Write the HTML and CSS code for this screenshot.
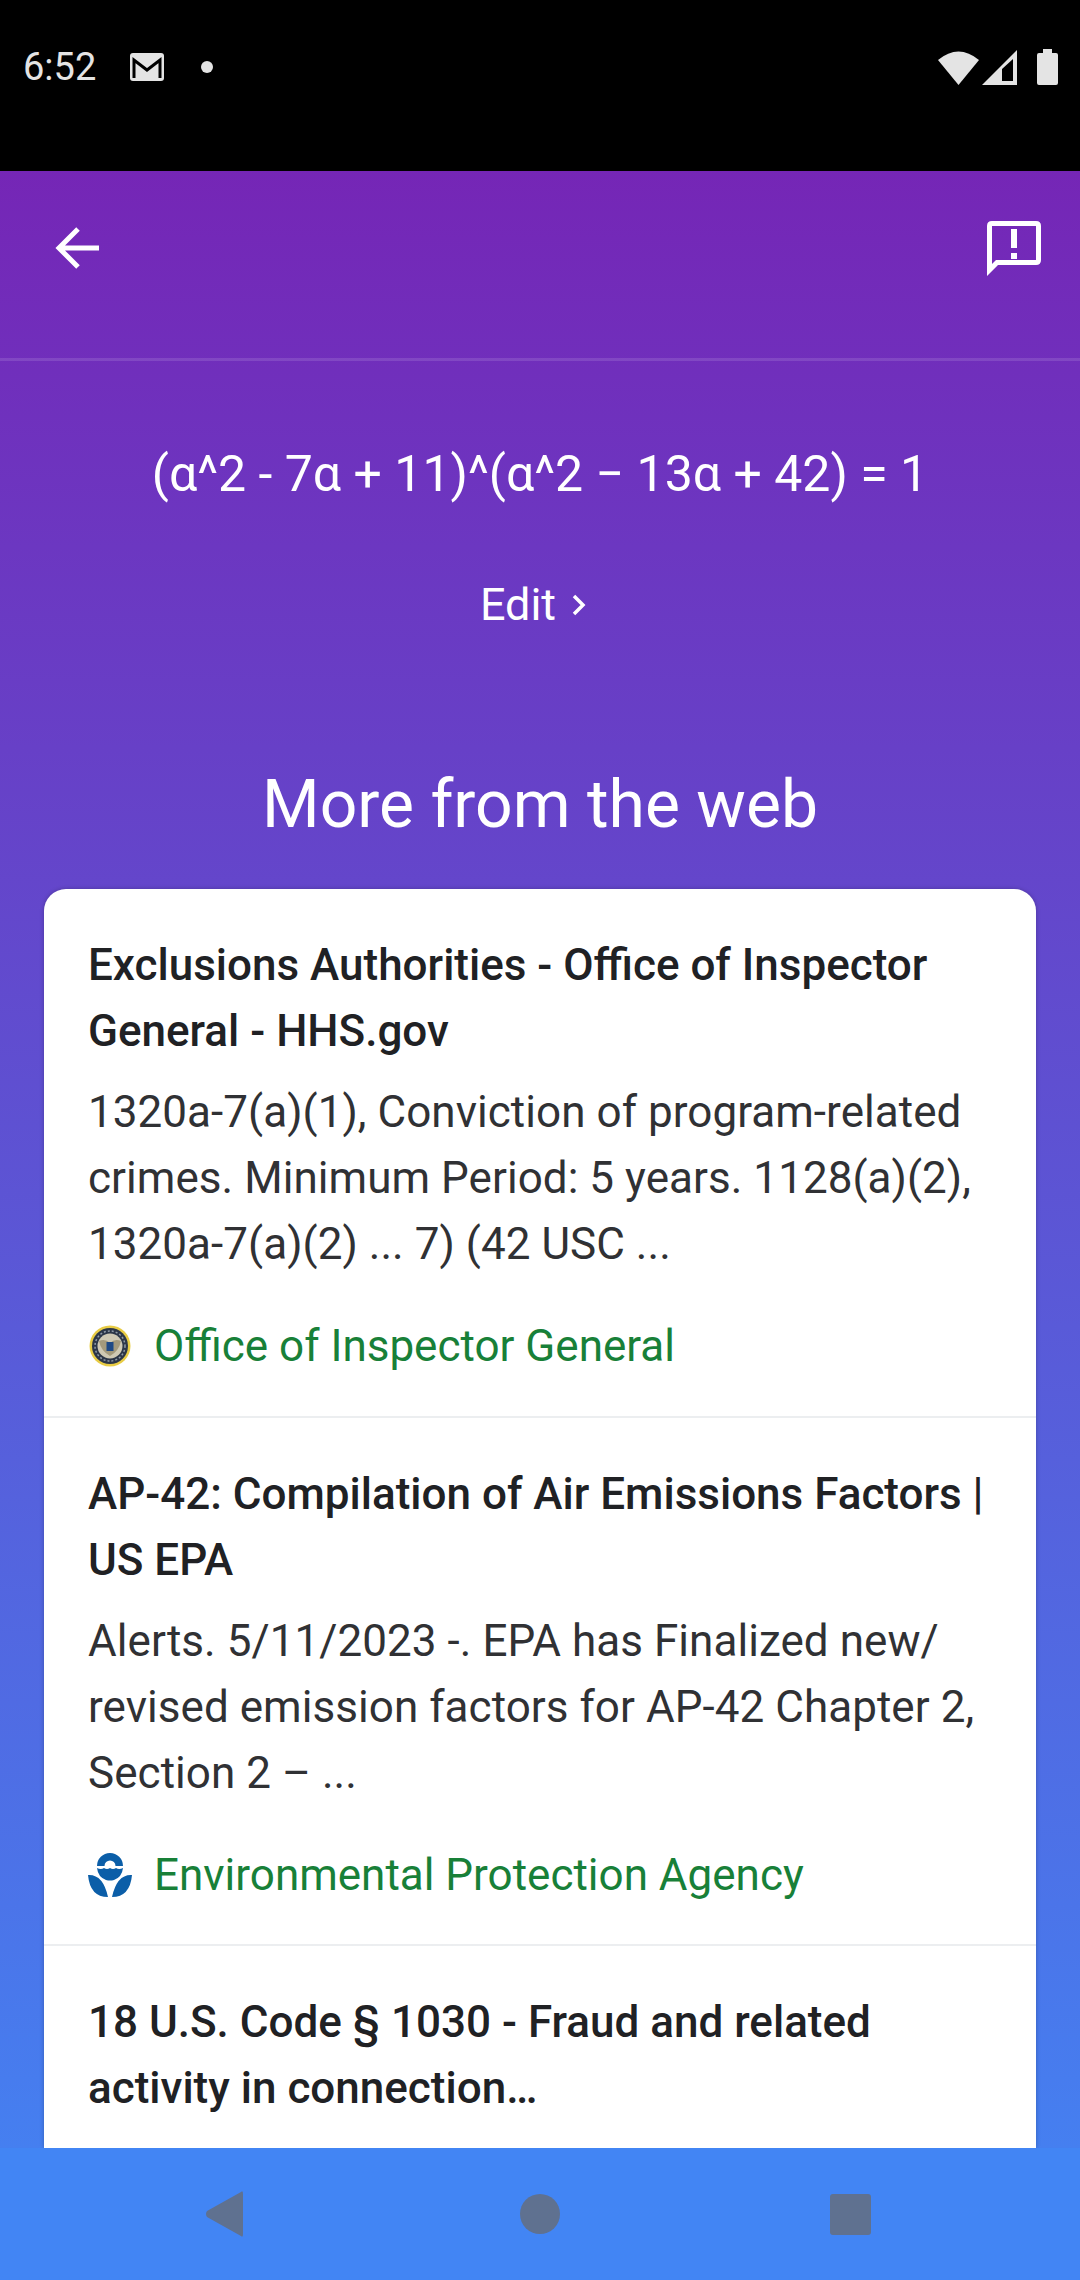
FILE: index.html
```html
<!DOCTYPE html>
<html lang="en">
<head>
<meta charset="utf-8">
<title>More from the web</title>
<link rel="stylesheet" href="styles.css">
</head>
<body>
<div class="phone">
  <header class="status">
    <div class="status-left">
      <span class="time">6:52</span>
      <svg class="gmail" width="36" height="28" viewBox="0 0 36 28"><rect width="34" height="28" x="1" rx="3" fill="#e4e4e4"/><path d="M5 25V7l13 10L31 7v18" fill="none" stroke="#000" stroke-width="3"/></svg>
      <span class="dot"></span>
    </div>
    <div class="status-right">
      <svg width="41" height="34" viewBox="0 0 41 34"><path d="M0 9Q20.500-8 41 9L20.500 34Z" fill="#e4e4e4"/></svg>
      <svg width="35" height="35" viewBox="0 0 35 35"><path d="M35 0V35H0ZM20 19V31H31V9Z" fill="#e4e4e4" fill-rule="evenodd"/></svg>
      <svg class="batt" width="21" height="36" viewBox="0 0 21 36"><path d="M6 0H15V4H19Q21 4 21 6V34Q21 36 19 36H2Q0 36 0 34V6Q0 4 2 4H6Z" fill="#e4e4e4"/></svg>
    </div>
  </header>
  <main class="screen">
    <nav class="toolbar">
      <svg class="back" width="48" height="48" viewBox="0 0 48 48"><path d="M46 24H6M25 5L6 24l19 19" fill="none" stroke="#fff" stroke-width="5"/></svg>
      <svg class="report" width="56" height="56" viewBox="0 0 56 56"><path d="M1 56V6Q1 1 6 1H50Q55 1 55 6V40Q55 45 50 45H12ZM6 44L10 40H50V6H6Z" fill="#fff" fill-rule="evenodd"/><path d="M25 9H31V28H25ZM25 33H31V39H25Z" fill="#fff"/></svg>
    </nav>
    <section class="query">
      <p class="equation">(α^2 - 7α + 11)^(α^2 − 13α + 42) = 1</p>
      <p class="edit">Edit <svg width="14" height="24" viewBox="0 0 14 24"><path d="M2 3l9 9-9 9" fill="none" stroke="#fff" stroke-width="3.500"/></svg></p>
    </section>
    <h1 class="heading">More from the web</h1>
    <section class="card">
      <article class="result">
        <h2>Exclusions Authorities - Office of Inspector General - HHS.gov</h2>
        <p class="snippet">1320a-7(a)(1), Conviction of program-related crimes. Minimum Period: 5 years. 1128(a)(2), 1320a-7(a)(2) ... 7) (42 USC ...</p>
        <div class="source">
          <svg class="favicon" width="44" height="44" viewBox="0 0 44 44"><circle cx="22" cy="22" r="20.500" fill="#e8cc45"/><circle cx="22" cy="22" r="18" fill="#2c3648"/><circle cx="22" cy="22" r="15" fill="none" stroke="#8f9aa6" stroke-width="1.500" stroke-dasharray="2 2"/><circle cx="22" cy="22" r="12.500" fill="#cfc9b4"/><path d="M11 17q6-3 11 2q5-5 11-2q-2 10-11 15q-9-5-11-15Z" fill="#a49a7c"/><rect x="18.500" y="18" width="7" height="9" fill="#1f4a86"/></svg>
          <span>Office of Inspector General</span>
        </div>
      </article>
      <article class="result">
        <h2>AP-42: Compilation of Air Emissions Factors | US EPA</h2>
        <p class="snippet">Alerts. 5/11/2023 -. EPA has Finalized new/ revised emission factors for AP-42 Chapter 2, Section 2 – ...</p>
        <div class="source">
          <svg class="favicon" width="44" height="44" viewBox="0 0 44 44"><path d="M9 13A13 13 0 0 1 35 13H27.500A5.500 5.500 0 0 0 16.500 13Z" fill="#0b5ea8"/><path d="M9 15Q13 17 16 15Q19 17 22 15Q25 17 28 15Q31 17 35 15Q34 24 26 27Q22 28 18 27Q10 24 9 15Z" fill="#0b5ea8"/><path d="M0 22Q15 21 20 44Q2 44 0 22ZM44 22Q29 21 24 44Q42 44 44 22Z" fill="#0b5ea8"/></svg>
          <span>Environmental Protection Agency</span>
        </div>
      </article>
      <article class="result">
        <h2>18 U.S. Code § 1030 - Fraud and related activity in connection…</h2>
      </article>
    </section>
  </main>
  <footer class="navbar">
    <svg width="40" height="46" viewBox="0 0 40 46"><path d="M36 1Q38-1 38 3V43Q38 47 36 45L2 26Q0 23 2 20Z" fill="#5f7190"/></svg>
    <svg width="40" height="40" viewBox="0 0 40 40"><circle cx="20" cy="20" r="20" fill="#5f7190"/></svg>
    <svg width="41" height="41" viewBox="0 0 41 41"><rect width="41" height="41" rx="3" fill="#5f7190"/></svg>
  </footer>
</div>
</body>
</html>
```
FILE: styles.css
```css
* { box-sizing: border-box; }
html, body { margin: 0; padding: 0; }
body { font-family: Roboto, "Liberation Sans", sans-serif; background: #000; }
.phone { width: 1080px; height: 2280px; display: flex; flex-direction: column; overflow: hidden; }
.status { height: 171px; flex: none; background: #000; display: flex; justify-content: space-between; align-items: flex-start; padding: 48px 22px 0 23px; }
.status-left { display: flex; align-items: center; height: 38px; }
.time { color: #e4e4e4; font-size: 38px; line-height: 38px; }
.gmail { margin-left: 33px; }
.dot { width: 12px; height: 12px; border-radius: 50%; background: #e4e4e4; margin-left: 36px; }
.status-right { display: flex; align-items: flex-end; gap: 3px; margin-top: 1px; }
.batt { margin-left: 17px; }
.screen { flex: 1; min-height: 0; overflow: hidden; background: linear-gradient(180deg, #7526b6 0%, #4285f4 100%) top / 100% 2109px no-repeat; display: flex; flex-direction: column; }
.toolbar { height: 190px; flex: none; border-bottom: 3px solid rgba(255,255,255,.12); display: flex; justify-content: space-between; align-items: flex-start; padding: 49px 38px 0 53px; }
.back { margin-top: 4px; }
.query { display: flex; flex-direction: column; align-items: center; color: #fff; }
.equation { margin: 85px 0 0; font-size: 50px; line-height: 56px; font-weight: 400; white-space: nowrap; }
.edit { margin: 78px 14px 0 0; font-size: 45px; line-height: 50px; display: flex; align-items: center; gap: 16px; font-weight: 400; }
.heading { margin: 137px 0 0; text-align: center; color: #fff; font-size: 66px; line-height: 76px; font-weight: 400; }
.card { margin: 46px 44px 0; background: #fff; border-radius: 22px 22px 0 0; flex: 1; min-height: 0; overflow: hidden; box-shadow: 0 0 4px rgba(0,0,0,.25); }
.result { padding: 43px 44px 0; border-bottom: 2px solid #eceef0; height: 528px; }
.result:first-child { height: 529px; }
.result:last-child { border-bottom: 0; }
.result h2 { margin: 0; font-size: 44px; line-height: 66px; font-weight: 500; color: #202124; }
.snippet { margin: 15px 0 0; font-size: 44px; line-height: 66px; color: #303134; letter-spacing: .05px; }
.source { display: flex; align-items: center; gap: 22px; margin-top: 36px; color: #188038; font-size: 44px; line-height: 66px; }
.favicon { flex: none; }
.navbar { height: 132px; flex: none; background: #4285f4; display: flex; align-items: center; padding: 0 0 0 205px; }
.navbar svg:nth-child(2) { margin-left: 275px; }
.navbar svg:nth-child(3) { margin-left: 270px; }
```
